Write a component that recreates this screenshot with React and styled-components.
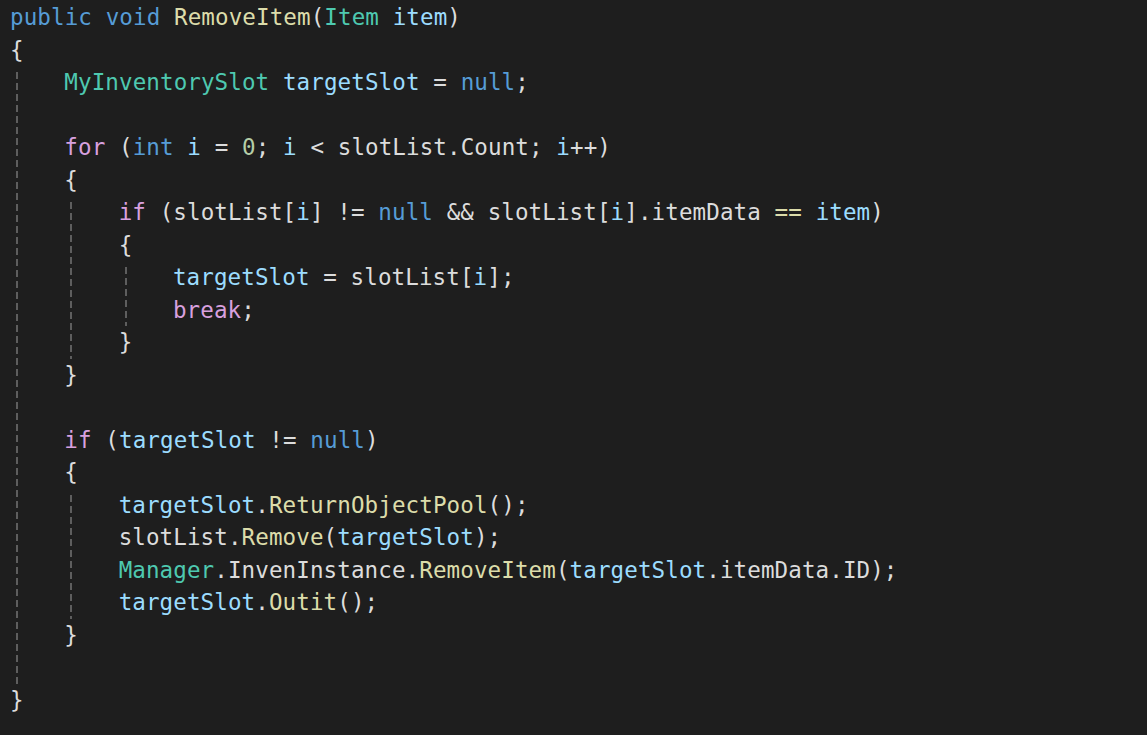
import React from 'react'
import styled, { createGlobalStyle } from 'styled-components'

const CH = 13.58
const LINE = 32.5

const colors = {
  kw: '#569cd6',
  ctrl: '#d8a0df',
  type: '#4ec9b0',
  local: '#9cdcfe',
  method: '#dcdcaa',
  num: '#b5cea8',
}

const Global = createGlobalStyle`
  html, body {
    margin: 0;
    background: #1e1e1e;
  }
`

const Editor = styled.main`
  box-sizing: border-box;
  height: 100vh;
  overflow: hidden;
  padding: 1px 0 0 10px;
  background: #1e1e1e;
  color: #dcdcdc;
  font-family: 'DejaVu Sans Mono', 'Liberation Mono', monospace;
  font-size: 22.56px;
  letter-spacing: 0.09px;
`

const Line = styled.div`
  height: ${LINE}px;
  line-height: ${LINE}px;
  white-space: pre;
`

// indented block body, its left edge carries the dashed indent guide
const Body = styled.div`
  padding-left: ${CH * 4}px;
  background:
    linear-gradient(#1e1e1e, #1e1e1e) 6px 0 / 2px 6px no-repeat,
    repeating-linear-gradient(to bottom, #5e5e5e 0 7px, transparent 7px 11px)
      6px 6px / 2px 11px repeat-y;
`

const Tok = styled.span`
  color: ${(p) => colors[p.$k] || '#dcdcdc'};
`

const Block = ({ children }) => (
  <>
    <Line>{'{'}</Line>
    <Body>{children}</Body>
    <Line>{'}'}</Line>
  </>
)

const App = () => {
  return (
    <>
      <Global />
      <Editor>
        <Line>
          <Tok $k='kw'>public</Tok> <Tok $k='kw'>void</Tok>{' '}
          <Tok $k='method'>RemoveItem</Tok>(<Tok $k='type'>Item</Tok>{' '}
          <Tok $k='local'>item</Tok>)
        </Line>
        <Block>
          <Line>
            <Tok $k='type'>MyInventorySlot</Tok> <Tok $k='local'>targetSlot</Tok>{' '}
            = <Tok $k='kw'>null</Tok>;
          </Line>
          <Line />
          <Line>
            <Tok $k='ctrl'>for</Tok> (<Tok $k='kw'>int</Tok> <Tok $k='local'>i</Tok> ={' '}
            <Tok $k='num'>0</Tok>; <Tok $k='local'>i</Tok> {'<'} slotList.Count;{' '}
            <Tok $k='local'>i</Tok>++)
          </Line>
          <Block>
            <Line>
              <Tok $k='ctrl'>if</Tok> (slotList[<Tok $k='local'>i</Tok>] !={' '}
              <Tok $k='kw'>null</Tok> && slotList[<Tok $k='local'>i</Tok>].itemData{' '}
              <Tok $k='method'>==</Tok> <Tok $k='local'>item</Tok>)
            </Line>
            <Block>
              <Line>
                <Tok $k='local'>targetSlot</Tok> = slotList[<Tok $k='local'>i</Tok>];
              </Line>
              <Line>
                <Tok $k='ctrl'>break</Tok>;
              </Line>
            </Block>
          </Block>
          <Line />
          <Line>
            <Tok $k='ctrl'>if</Tok> (<Tok $k='local'>targetSlot</Tok> !={' '}
            <Tok $k='kw'>null</Tok>)
          </Line>
          <Block>
            <Line>
              <Tok $k='local'>targetSlot</Tok>.<Tok $k='method'>ReturnObjectPool</Tok>();
            </Line>
            <Line>
              slotList.<Tok $k='method'>Remove</Tok>(<Tok $k='local'>targetSlot</Tok>);
            </Line>
            <Line>
              <Tok $k='type'>Manager</Tok>.InvenInstance.
              <Tok $k='method'>RemoveItem</Tok>(<Tok $k='local'>targetSlot</Tok>
              .itemData.ID);
            </Line>
            <Line>
              <Tok $k='local'>targetSlot</Tok>.<Tok $k='method'>Outit</Tok>();
            </Line>
          </Block>
          <Line />
        </Block>
      </Editor>
    </>
  )
}

export default App
